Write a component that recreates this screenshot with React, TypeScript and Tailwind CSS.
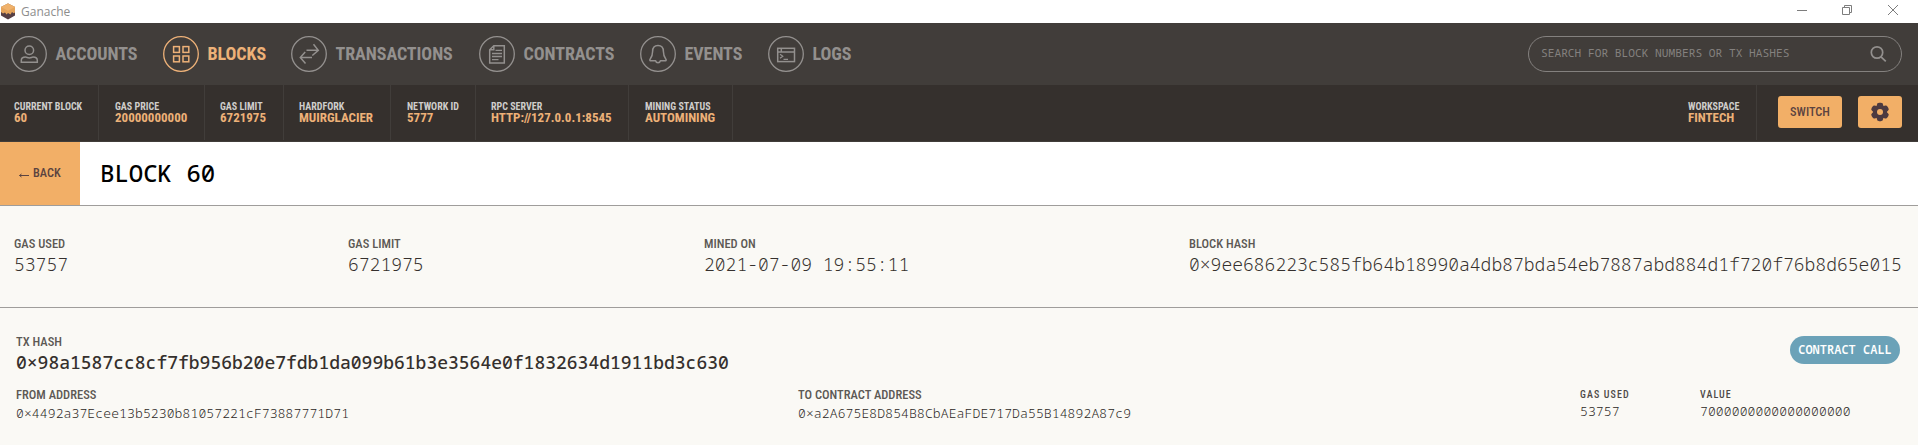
import type { ReactNode } from "react";

const cond = "font-['Roboto_Condensed',Roboto,sans-serif]";
const mono = "font-['Noto_Sans_Mono','Liberation_Mono',monospace]";

const icons: Record<string, ReactNode> = {
  accounts: (
    <>
      <circle cx="18.3" cy="14.3" r="4.3" />
      <path d="M10.3 26.3v-1.8c0-2.6 2-3.4 4.3-3.4 1.2 0 2 .8 3.7.8s2.5-.8 3.7-.8c2.3 0 4.3.8 4.3 3.4v1.8z" />
    </>
  ),
  blocks: (
    <>
      <rect x="10.6" y="10.6" width="5.8" height="5.8" />
      <rect x="20" y="10.6" width="5.8" height="5.8" />
      <rect x="10.6" y="20" width="5.8" height="5.8" />
      <rect x="20" y="20" width="5.8" height="5.8" />
    </>
  ),
  transactions: (
    <>
      <path d="M15.5 14.3H27M22.5 8.3l4.8 6-6 5.2" />
      <path d="M21 21.5H9.5M14.2 16l-4.9 5.5 5.2 6" />
    </>
  ),
  contracts: (
    <>
      <path d="M14.8 9.7H25.3V27H10.7V13.8zM14.8 9.7v4.1h-4.1" />
      <path d="M16.5 14.3H23M13 17.5H23M13 20.5H23M13 23.7h6.5" strokeWidth="1.3" />
    </>
  ),
  events: (
    <path
      strokeLinejoin="round"
      d="M18 9.6c-3.6 0-5.4 2.5-5.4 6 0 4-.8 5.6-2.5 7.6-.6.9-.2 1.6.8 1.6h4.7c.3 1.2 1.2 2 2.4 2s2.1-.8 2.4-2h4.7c1 0 1.4-.7.8-1.6-1.7-2-2.5-3.6-2.5-7.6 0-3.5-1.8-6-5.4-6z"
    />
  ),
  logs: (
    <>
      <rect x="9.7" y="12.3" width="16.8" height="13.3" />
      <path d="M9.7 16h16.8M13.3 12.3V16" />
      <path d="M12 18.3l2.8 2-2.8 2M15.5 23.3h4.5" strokeWidth="1.2" />
    </>
  ),
};

const nav = [
  { key: "accounts", label: "Accounts", w: "w-[152px]" },
  { key: "blocks", label: "Blocks", w: "w-[128px]" },
  { key: "transactions", label: "Transactions", w: "w-[188px]" },
  { key: "contracts", label: "Contracts", w: "w-[161px]" },
  { key: "events", label: "Events", w: "w-[128px]" },
  { key: "logs", label: "Logs", w: "w-[100px]" },
];

const status = [
  { label: "Current Block", value: "60", w: "w-[99px] pl-[14px]" },
  { label: "Gas Price", value: "20000000000", w: "w-[106px] pl-4" },
  { label: "Gas Limit", value: "6721975", w: "w-[79px] pl-[15px]" },
  { label: "Hardfork", value: "MuirGlacier", w: "w-[107px] pl-[15px]" },
  { label: "Network ID", value: "5777", w: "w-[85px] pl-4" },
  { label: "RPC Server", value: "http://127.0.0.1:8545", w: "w-[153px] pl-[15px]" },
  { label: "Mining Status", value: "Automining", w: "w-[104px] pl-4" },
];

const details = [
  { label: "Gas Used", value: "53757", w: "w-[334px]" },
  { label: "Gas Limit", value: "6721975", w: "w-[356px]" },
  { label: "Mined On", value: "2021-07-09 19:55:11", w: "w-[485px]" },
  { label: "Block Hash", value: "0×9ee686223c585fb64b18990a4db87bda54eb7887abd884d1f720f76b8d65e015", w: "flex-1" },
];

function TitleBar() {
  return (
    <div className="flex h-[23px] items-center justify-between bg-white">
      <div className="flex items-center">
        <svg width="16" height="17" viewBox="0 0 16 17">
          <path d="M8 .5l7 3.5v8.5l-7 4-7-4V4z" fill="#553f45" />
          <path d="M8 .5l7 3.5v5.5l-1.5.8-1.5-1.3-1.5 2.5L8 10l-1.5 1.5L5 9.5l-2 1L1 9V4z" fill="#e5a45b" />
          <path d="M8 .5l7 3.5-7 3.7L1 4z" fill="#f0b26c" />
        </svg>
        <span className="ml-[5px] font-['Open_Sans',sans-serif] text-[12px] leading-4 text-[#8d8d8d]">Ganache</span>
      </div>
      <svg width="122" height="23" viewBox="0 0 122 23" fill="none" stroke="#7d7d7d">
        <path d="M1 10.5h10" />
        <path d="M46.5 7.5h7v7h-7zM48.5 7.5v-2h7v7h-2" />
        <path d="M92 5l10 10M102 5L92 15" />
      </svg>
    </div>
  );
}

function Stat({ label, value }: { label: string; value: string }) {
  return (
    <div className={`flex flex-col whitespace-nowrap font-bold uppercase ${cond}`}>
      <span className="text-[10px] leading-[11px] text-[#cfcdcb]">{label}</span>
      <span className="text-[13px] leading-[11px] text-[#edb178]">{value}</span>
    </div>
  );
}

function Label({ children }: { children: ReactNode }) {
  return <div className={`text-[12.5px] leading-4 font-medium whitespace-nowrap text-[#5c5854] uppercase ${cond}`}>{children}</div>;
}

function SmallLabel({ children }: { children: ReactNode }) {
  return <div className={`text-[10px] leading-4 font-medium tracking-[1.1px] text-[#4c4845] uppercase ${cond}`}>{children}</div>;
}

export default function App() {
  return (
    <div className="flex h-[445px] w-[1918px] flex-col overflow-hidden bg-[#faf9f5]">
      <TitleBar />
      <header className="flex h-[62px] items-center justify-between bg-[#413d3a] pr-4 pb-px pl-[11px]">
        <nav className="flex">
          {nav.map((n) => (
            <a key={n.key} className={`flex items-center gap-[8.5px] ${n.w} ${n.key === "blocks" ? "text-[#edb178]" : "text-[#93908e]"}`}>
              <svg width="36" height="36" viewBox="0 0 36 36" fill="none" stroke="currentColor" strokeWidth="1.5" className="shrink-0">
                <circle cx="18" cy="18" r="17.3" strokeWidth="1.3" />
                {icons[n.key]}
              </svg>
              <span className={`text-[18px] leading-9 font-bold tracking-[-0.06px] uppercase ${cond}`}>{n.label}</span>
            </a>
          ))}
        </nav>
        <div className="flex h-9 w-[374px] items-center justify-between rounded-full border border-[#84817f] pr-[14px] pl-3">
          <span className={`text-[11.2px] text-[#84817f] uppercase ${mono}`}>Search for block numbers or tx hashes</span>
          <svg width="18" height="18" viewBox="0 0 18 18" fill="none" stroke="#93908e" strokeWidth="1.7">
            <circle cx="8" cy="7.5" r="5.7" />
            <path d="M12 11.8l4.8 4.5" />
          </svg>
        </div>
      </header>
      <section className="flex h-[57px] justify-between border-b border-[#413d3a] bg-[#35302d]">
        <div className="flex h-[55px]">
          {status.map((s) => (
            <div key={s.label} className={`border-r border-[#413d3a] pt-[15.5px] ${s.w}`}>
              <Stat label={s.label} value={s.value} />
            </div>
          ))}
        </div>
        <div className="flex h-[55px] pr-4">
          <div className="w-[69px] border-r border-[#413d3a] pt-[15.5px]">
            <Stat label="Workspace" value="Fintech" />
          </div>
          <button className={`mt-[11px] ml-[21px] h-8 w-16 rounded-[3px] bg-[#f2af67] text-[12.3px] font-medium text-[#5b4340] uppercase ${cond}`}>Switch</button>
          <button className="mt-[11px] ml-4 flex h-8 w-11 items-center justify-center rounded-[3px] bg-[#f2af67]">
            <svg width="20" height="20" viewBox="0 0 20 20" fill="#4d3a40">
              <circle cx="10" cy="10" r="7" />
              {[0, 60, 120, 180, 240, 300].map((a) => (
                <rect key={a} x="6.8" y="0.8" width="6.4" height="6" rx="2.4" transform={`rotate(${a} 10 10)`} />
              ))}
              <circle cx="10" cy="10" r="3" fill="#f2af67" />
            </svg>
          </button>
        </div>
      </section>
      <section className="flex h-16 border-b border-[#9f9d9b] bg-white">
        <button className={`flex w-20 items-center bg-[#f2af67] pl-[18px] text-[12.3px] font-medium text-[#5b4340] uppercase ${cond}`}>
          <svg width="12" height="8" viewBox="0 0 12 8" fill="none" stroke="currentColor" className="mt-[3px] mr-[3px]">
            <path d="M11 4.5H1.5M3.5 3L1.5 4.5l2 1.5" />
          </svg>
          Back
        </button>
        <h1 className={`ml-5 text-[24px] leading-[62px] font-medium text-black uppercase ${mono}`}>Block 60</h1>
      </section>
      <section className="flex h-[102px] border-b border-[#9f9d9b] pt-[30px] pl-[14px]">
        {details.map((d) => (
          <div key={d.label} className={d.w}>
            <Label>{d.label}</Label>
            <div className={`text-[18px] leading-6 font-light whitespace-nowrap text-[#35302d] ${mono}`}>{d.value}</div>
          </div>
        ))}
      </section>
      <section className="flex flex-col pt-[26px] pl-4">
        <div className="flex justify-between pr-[18px]">
          <div>
            <Label>Tx Hash</Label>
            <div className={`text-[18px] leading-[25px] font-medium whitespace-nowrap text-[#35302d] ${mono}`}>0×98a1587cc8cf7fb956b20e7fdb1da099b61b3e3564e0f1832634d1911bd3c630</div>
          </div>
          <div className={`mt-[2px] flex h-7 w-[110px] items-center justify-center rounded-full bg-[#6ba2b8] text-[12px] font-semibold text-white uppercase ${mono}`}>Contract Call</div>
        </div>
        <div className={`mt-3 flex text-[13px] leading-5 font-[350] tracking-[0.13px] whitespace-nowrap text-[#2b2623] ${mono}`}>
          <div className="w-[782px]">
            <div className="tracking-normal"><Label>From Address</Label></div>
            <div>0×4492a37Ecee13b5230b81057221cF73887771D71</div>
          </div>
          <div className="w-[782px]">
            <div className="tracking-normal"><Label>To Contract Address</Label></div>
            <div>0×a2A675E8D854B8CbAEaFDE717Da55B14892A87c9</div>
          </div>
          <div className="w-[120px]">
            <SmallLabel>Gas Used</SmallLabel>
            <div className="leading-[17px]">53757</div>
          </div>
          <div>
            <SmallLabel>Value</SmallLabel>
            <div className="leading-[17px]">7000000000000000000</div>
          </div>
        </div>
      </section>
    </div>
  );
}
